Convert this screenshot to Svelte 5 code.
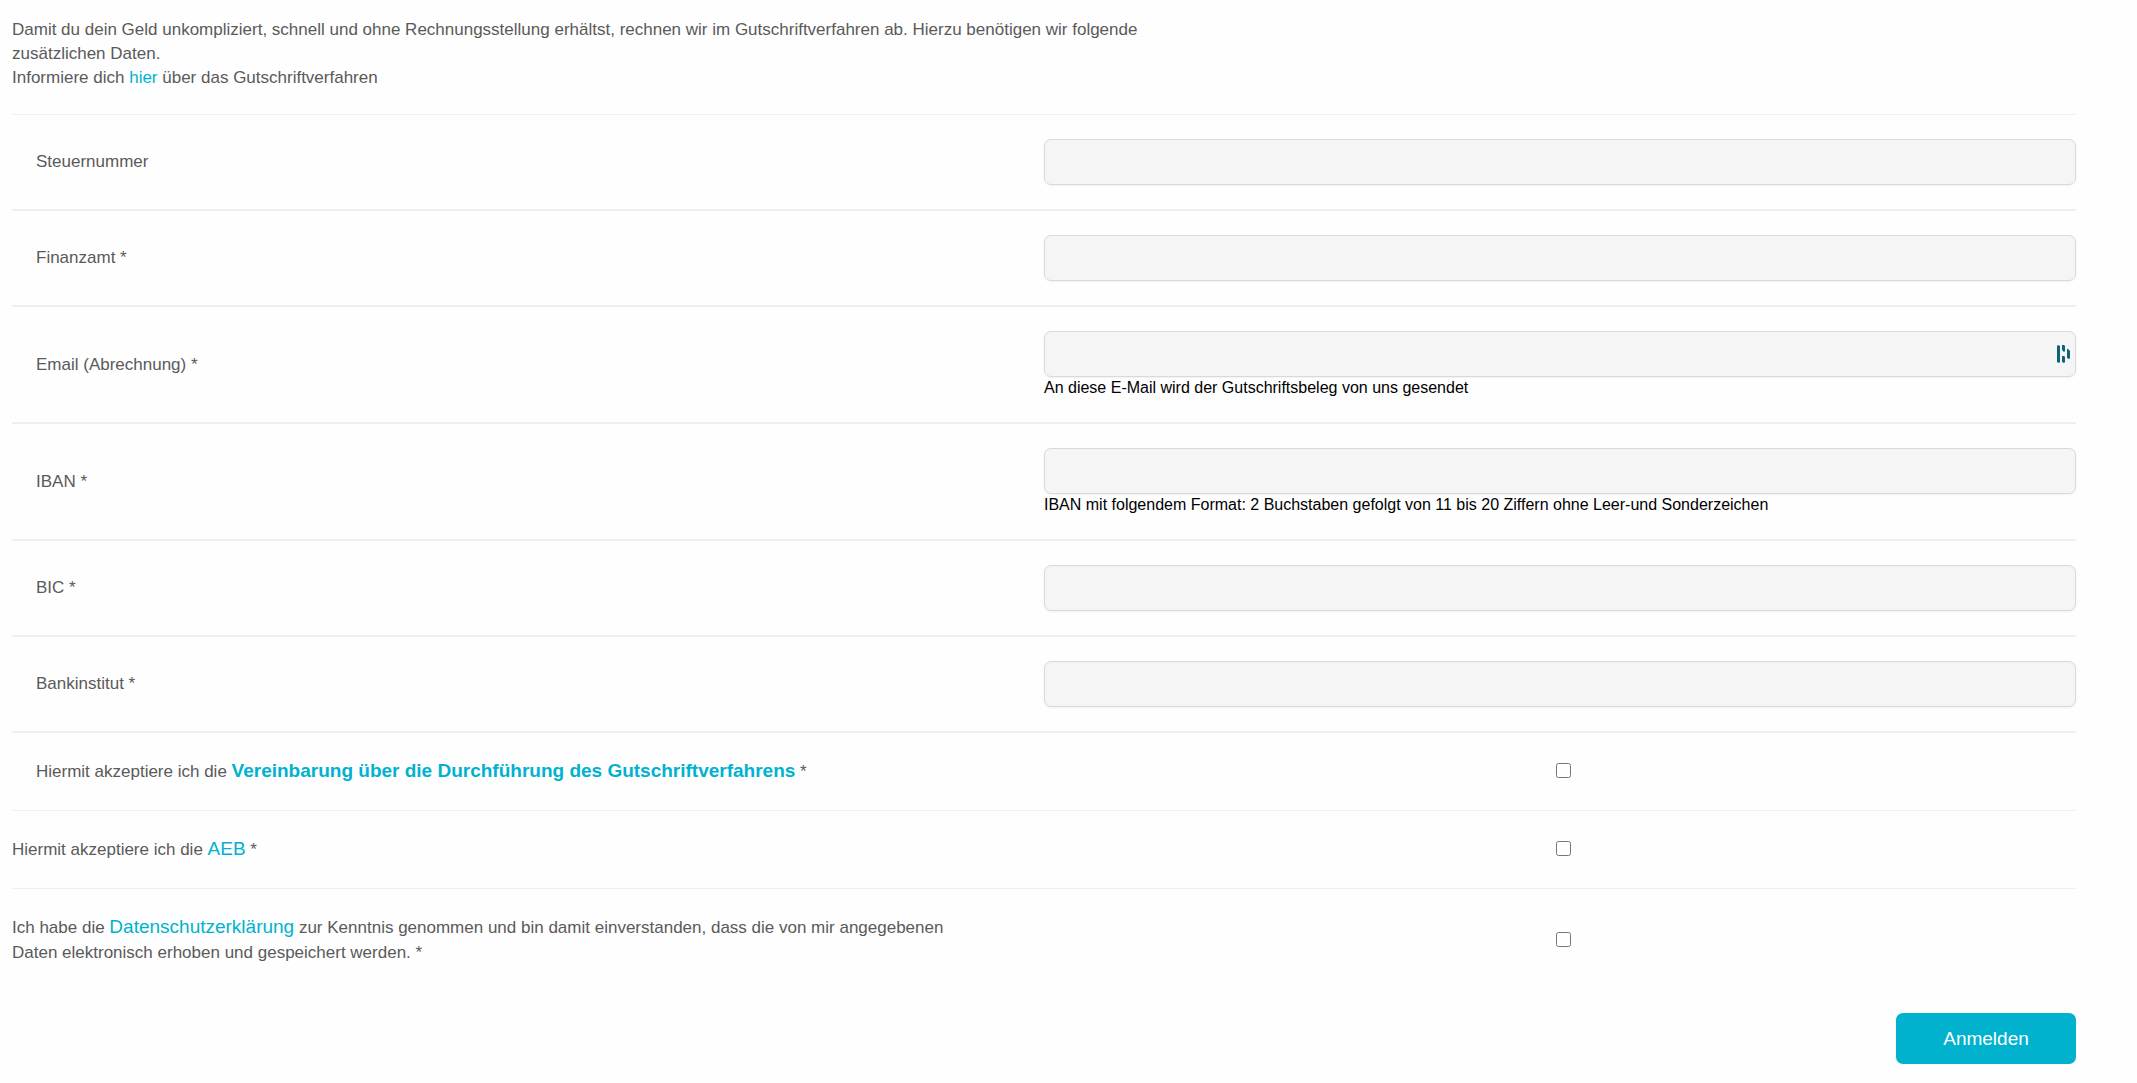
<form class="billing" on:submit|preventDefault>
    <p class="intro">
        Damit du dein Geld unkompliziert, schnell und ohne Rechnungsstellung erhältst, rechnen wir im Gutschriftverfahren ab. Hierzu benötigen wir folgende zusätzlichen Daten.<br>
        Informiere dich <a href="#gutschriftverfahren">hier</a> über das Gutschriftverfahren
    </p>

    <div class="fields">
        {#each fields as field}
            <div class="row">
                <label class="label indent" for={field.id}>{field.label}{field.required ? ' *' : ''}</label>
                <div class="control">
                    <input class="text" id={field.id} type={field.type ?? 'text'} required={field.required} bind:value={values[field.id]}>
                    {#if field.type === 'email'}
                        <svg class="manager" viewBox="0 0 13 18" aria-hidden="true">
                            <path d="M0 1L1 0L3 1V17L2 18L0 17Z" />
                            <path d="M5 0H7L8 1V6L7 7L5 5Z" />
                            <path d="M5 11H7L8 12V17L7 18L5 17Z" />
                            <path d="M10 4H11L13 6V13L12 14L10 13Z" />
                        </svg>
                    {/if}
                    {#if field.hint}
                        <div class="hint">{field.hint}</div>
                    {/if}
                </div>
            </div>
        {/each}
    </div>

    <div class="row consent">
        <label class="label indent" for="agreement">Hiermit akzeptiere ich die <a class="strong" href="#vereinbarung">Vereinbarung über die Durchführung des Gutschriftverfahrens</a> *</label>
        <div class="check"><input id="agreement" type="checkbox" required></div>
    </div>
    <div class="row consent">
        <label class="label" for="aeb">Hiermit akzeptiere ich die <a href="#aeb">AEB</a> *</label>
        <div class="check"><input id="aeb" type="checkbox" required></div>
    </div>
    <div class="row consent">
        <label class="label" for="privacy">Ich habe die <a href="#datenschutz">Datenschutzerklärung</a> zur Kenntnis genommen und bin damit einverstanden, dass die von mir angegebenen Daten elektronisch erhoben und gespeichert werden. *</label>
        <div class="check"><input id="privacy" type="checkbox" required></div>
    </div>

    <div class="actions">
        <button type="submit">Anmelden</button>
    </div>
</form>

<script>
    const fields = [
        { id: 'steuernummer', label: 'Steuernummer' },
        { id: 'finanzamt', label: 'Finanzamt', required: true },
        { id: 'email', label: 'Email (Abrechnung)', type: 'email', required: true, hint: 'An diese E-Mail wird der Gutschriftsbeleg von uns gesendet' },
        { id: 'iban', label: 'IBAN', required: true, hint: 'IBAN mit folgendem Format: 2 Buchstaben gefolgt von 11 bis 20 Ziffern ohne Leer-und Sonderzeichen' },
        { id: 'bic', label: 'BIC', required: true },
        { id: 'bankinstitut', label: 'Bankinstitut', required: true },
    ];

    let values = Object.fromEntries(fields.map(({ id }) => [id, '']));
</script>

<style>
    :global(body) {
        margin: 0;
        background: #fefefe;
    }

    .billing {
        padding: 18px 61px 18px 12px;
        font-family: Arial, "Liberation Sans", sans-serif;
        font-size: 17px;
        line-height: 24px;
        color: #5a5a5a;
    }

    .intro {
        max-width: 1160px;
        margin: 0 0 24px;
    }

    a {
        color: #00b2ce;
        text-decoration: none;
    }

    .fields {
        border-top: 1px solid #efefef;
    }

    .row {
        display: grid;
        grid-template-columns: 1fr 1fr;
        align-items: center;
        padding: 24px 0;
        border-bottom: 2px solid #efefef;
    }

    .label {
        padding-right: 72px;
    }

    .indent {
        padding-left: 24px;
    }

    .control {
        position: relative;
    }

    .text {
        display: block;
        box-sizing: border-box;
        width: 100%;
        height: 46px;
        padding: 0 32px 0 12px;
        border: 1px solid #d9d9d9;
        border-radius: 7px;
        background: #f5f5f5;
        box-shadow: 0 1px 2px #0000000d;
        font: inherit;
        color: inherit;
    }

    .manager {
        position: absolute;
        top: 14px;
        right: 6px;
        width: 13px;
        height: 18px;
        fill: #0e6377;
    }

    .hint {
        font-size: 16px;
        line-height: 21px;
        color: #000;
    }

    .consent {
        padding: 26px 0;
        border-bottom-width: 1px;
        line-height: 25px;
    }

    .consent:nth-last-child(2) {
        border-bottom: none;
    }

    .consent a {
        font-size: 19px;
        line-height: 1;
    }

    .consent .strong {
        font-weight: bold;
    }

    .check {
        display: flex;
        justify-content: center;
        padding: 0 0 2px 6px;
    }

    .check input {
        width: 15px;
        height: 15px;
        margin: 0;
    }

    .actions {
        display: flex;
        justify-content: flex-end;
        margin-top: 22px;
    }

    button {
        width: 180px;
        height: 51px;
        border: none;
        border-radius: 7px;
        background: #00b2ce;
        font: inherit;
        font-size: 19px;
        color: #fff;
        cursor: pointer;
    }
</style>
